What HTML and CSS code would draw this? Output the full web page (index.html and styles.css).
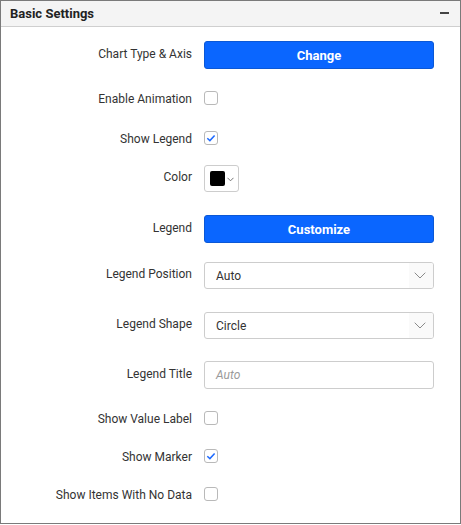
FILE: index.html
```html
<!DOCTYPE html>
<html>
<head>
<meta charset="utf-8">
<link rel="stylesheet" href="styles.css">
</head>
<body>
<div class="panel">
  <div class="panel-header">
    <span class="panel-title">Basic Settings</span>
    <span class="collapse-icon"></span>
  </div>
  <div class="panel-body">
    <div class="row">
      <label class="row-label">Chart Type &amp; Axis</label>
      <button class="btn-primary">Change</button>
    </div>
    <div class="row row-check mt-22">
      <label class="row-label">Enable Animation</label>
      <span class="checkbox"></span>
    </div>
    <div class="row row-check mt-26">
      <label class="row-label">Show Legend</label>
      <span class="checkbox checked"><svg viewBox="0 0 14 14" width="14" height="14"><path d="M3.3 7.2 L5.9 9.6 L10.6 4.4" fill="none" stroke="#1f6bff" stroke-width="1.5"/></svg></span>
    </div>
    <div class="row mt-20">
      <label class="row-label">Color</label>
      <span class="color-picker"><span class="swatch"></span><svg class="mini-chevron" viewBox="0 0 7 5" width="7" height="5"><path d="M0.5 0.8 L3.5 3.8 L6.5 0.8" fill="none" stroke="#666" stroke-width="0.9"/></svg></span>
    </div>
    <div class="row mt-23">
      <label class="row-label">Legend</label>
      <button class="btn-primary">Customize</button>
    </div>
    <div class="row mt-19">
      <label class="row-label">Legend Position</label>
      <div class="select"><span class="select-text">Auto</span><span class="select-arrow"><svg viewBox="0 0 12 7" width="12" height="7"><path d="M0.7 0.7 L6 6 L11.3 0.7" fill="none" stroke="#8a8a8a" stroke-width="1"/></svg></span></div>
    </div>
    <div class="row mt-23">
      <label class="row-label">Legend Shape</label>
      <div class="select"><span class="select-text">Circle</span><span class="select-arrow"><svg viewBox="0 0 12 7" width="12" height="7"><path d="M0.7 0.7 L6 6 L11.3 0.7" fill="none" stroke="#8a8a8a" stroke-width="1"/></svg></span></div>
    </div>
    <div class="row mt-22">
      <label class="row-label">Legend Title</label>
      <div class="text-input"><span class="placeholder">Auto</span></div>
    </div>
    <div class="row row-check mt-22">
      <label class="row-label">Show Value Label</label>
      <span class="checkbox"></span>
    </div>
    <div class="row row-check mt-24">
      <label class="row-label">Show Marker</label>
      <span class="checkbox checked"><svg viewBox="0 0 14 14" width="14" height="14"><path d="M3.3 7.2 L5.9 9.6 L10.6 4.4" fill="none" stroke="#1f6bff" stroke-width="1.5"/></svg></span>
    </div>
    <div class="row row-check mt-24">
      <label class="row-label">Show Items With No Data</label>
      <span class="checkbox"></span>
    </div>
  </div>
</div>
</body>
</html>
```

FILE: styles.css
```css
* { box-sizing: border-box; }
html, body { margin: 0; padding: 0; background: #fff; }
body { font-family: Roboto, "Liberation Sans", sans-serif; color: #333; }

.panel {
  width: 461px;
  height: 524px;
  border: 1px solid #7a7a7a;
  background: #fff;
}

.panel-header {
  height: 26px;
  background: #f4f4f4;
  border-bottom: 1px solid #cfcfcf;
  display: flex;
  align-items: center;
  justify-content: space-between;
  padding: 0 10px 1px 9px;
}
.panel-title {
  font-size: 13px;
  font-weight: 700;
  color: #222;
}
.collapse-icon {
  width: 9px;
  height: 2px;
  background: #444;
  margin-right: 1px;
}

.panel-body {
  padding-top: 14px;
  display: flex;
  flex-direction: column;
}

.row {
  display: flex;
  align-items: center;
}
.mt-19 { margin-top: 19px; }
.mt-20 { margin-top: 20px; }
.mt-22 { margin-top: 22px; }
.mt-23 { margin-top: 23px; }
.mt-24 { margin-top: 24px; }
.mt-26 { margin-top: 26px; }

.row-label {
  width: 191px;
  margin-right: 12px;
  margin-top: -3px;
  text-align: right;
  font-size: 12px;
  line-height: 14px;
  color: #333;
}
.row-check .row-label {
  margin-top: 1px;
  margin-bottom: -1px;
}

.btn-primary {
  width: 230px;
  height: 28px;
  border: 1px solid #0b58d6;
  border-radius: 3px;
  background: #0a66ff;
  color: #fff;
  font-family: Roboto, "Liberation Sans", sans-serif;
  font-size: 13px;
  font-weight: 700;
  padding: 0;
}

.checkbox {
  width: 14px;
  height: 14px;
  border: 1px solid #b9b9b9;
  border-radius: 3px;
  background: #fff;
  position: relative;
  display: block;
}
.checkbox svg {
  position: absolute;
  left: -1px;
  top: -1px;
}

.color-picker {
  width: 35px;
  height: 27px;
  border: 1px solid #cdcdcd;
  border-radius: 3px;
  display: flex;
  align-items: center;
  padding-left: 5px;
  gap: 2px;
}
.swatch {
  width: 15px;
  height: 15px;
  background: #000;
  border-radius: 2px;
}
.mini-chevron { margin-top: 1px; }

.select {
  width: 230px;
  height: 27px;
  border: 1px solid #cdcdcd;
  border-radius: 3px;
  display: flex;
  align-items: center;
  justify-content: space-between;
  overflow: hidden;
}
.select-text {
  font-size: 12px;
  color: #333;
  padding-left: 11px;
  padding-top: 1px;
}
.select-arrow {
  width: 24px;
  height: 100%;
  background: #fafafa;
  display: flex;
  align-items: center;
  justify-content: flex-start;
  padding-left: 5px;
}

.text-input {
  width: 230px;
  height: 28px;
  border: 1px solid #cdcdcd;
  border-radius: 3px;
  display: flex;
  align-items: center;
  padding-left: 11px;
}
.placeholder {
  font-size: 12px;
  font-style: italic;
  color: #9a9a9a;
}
```
